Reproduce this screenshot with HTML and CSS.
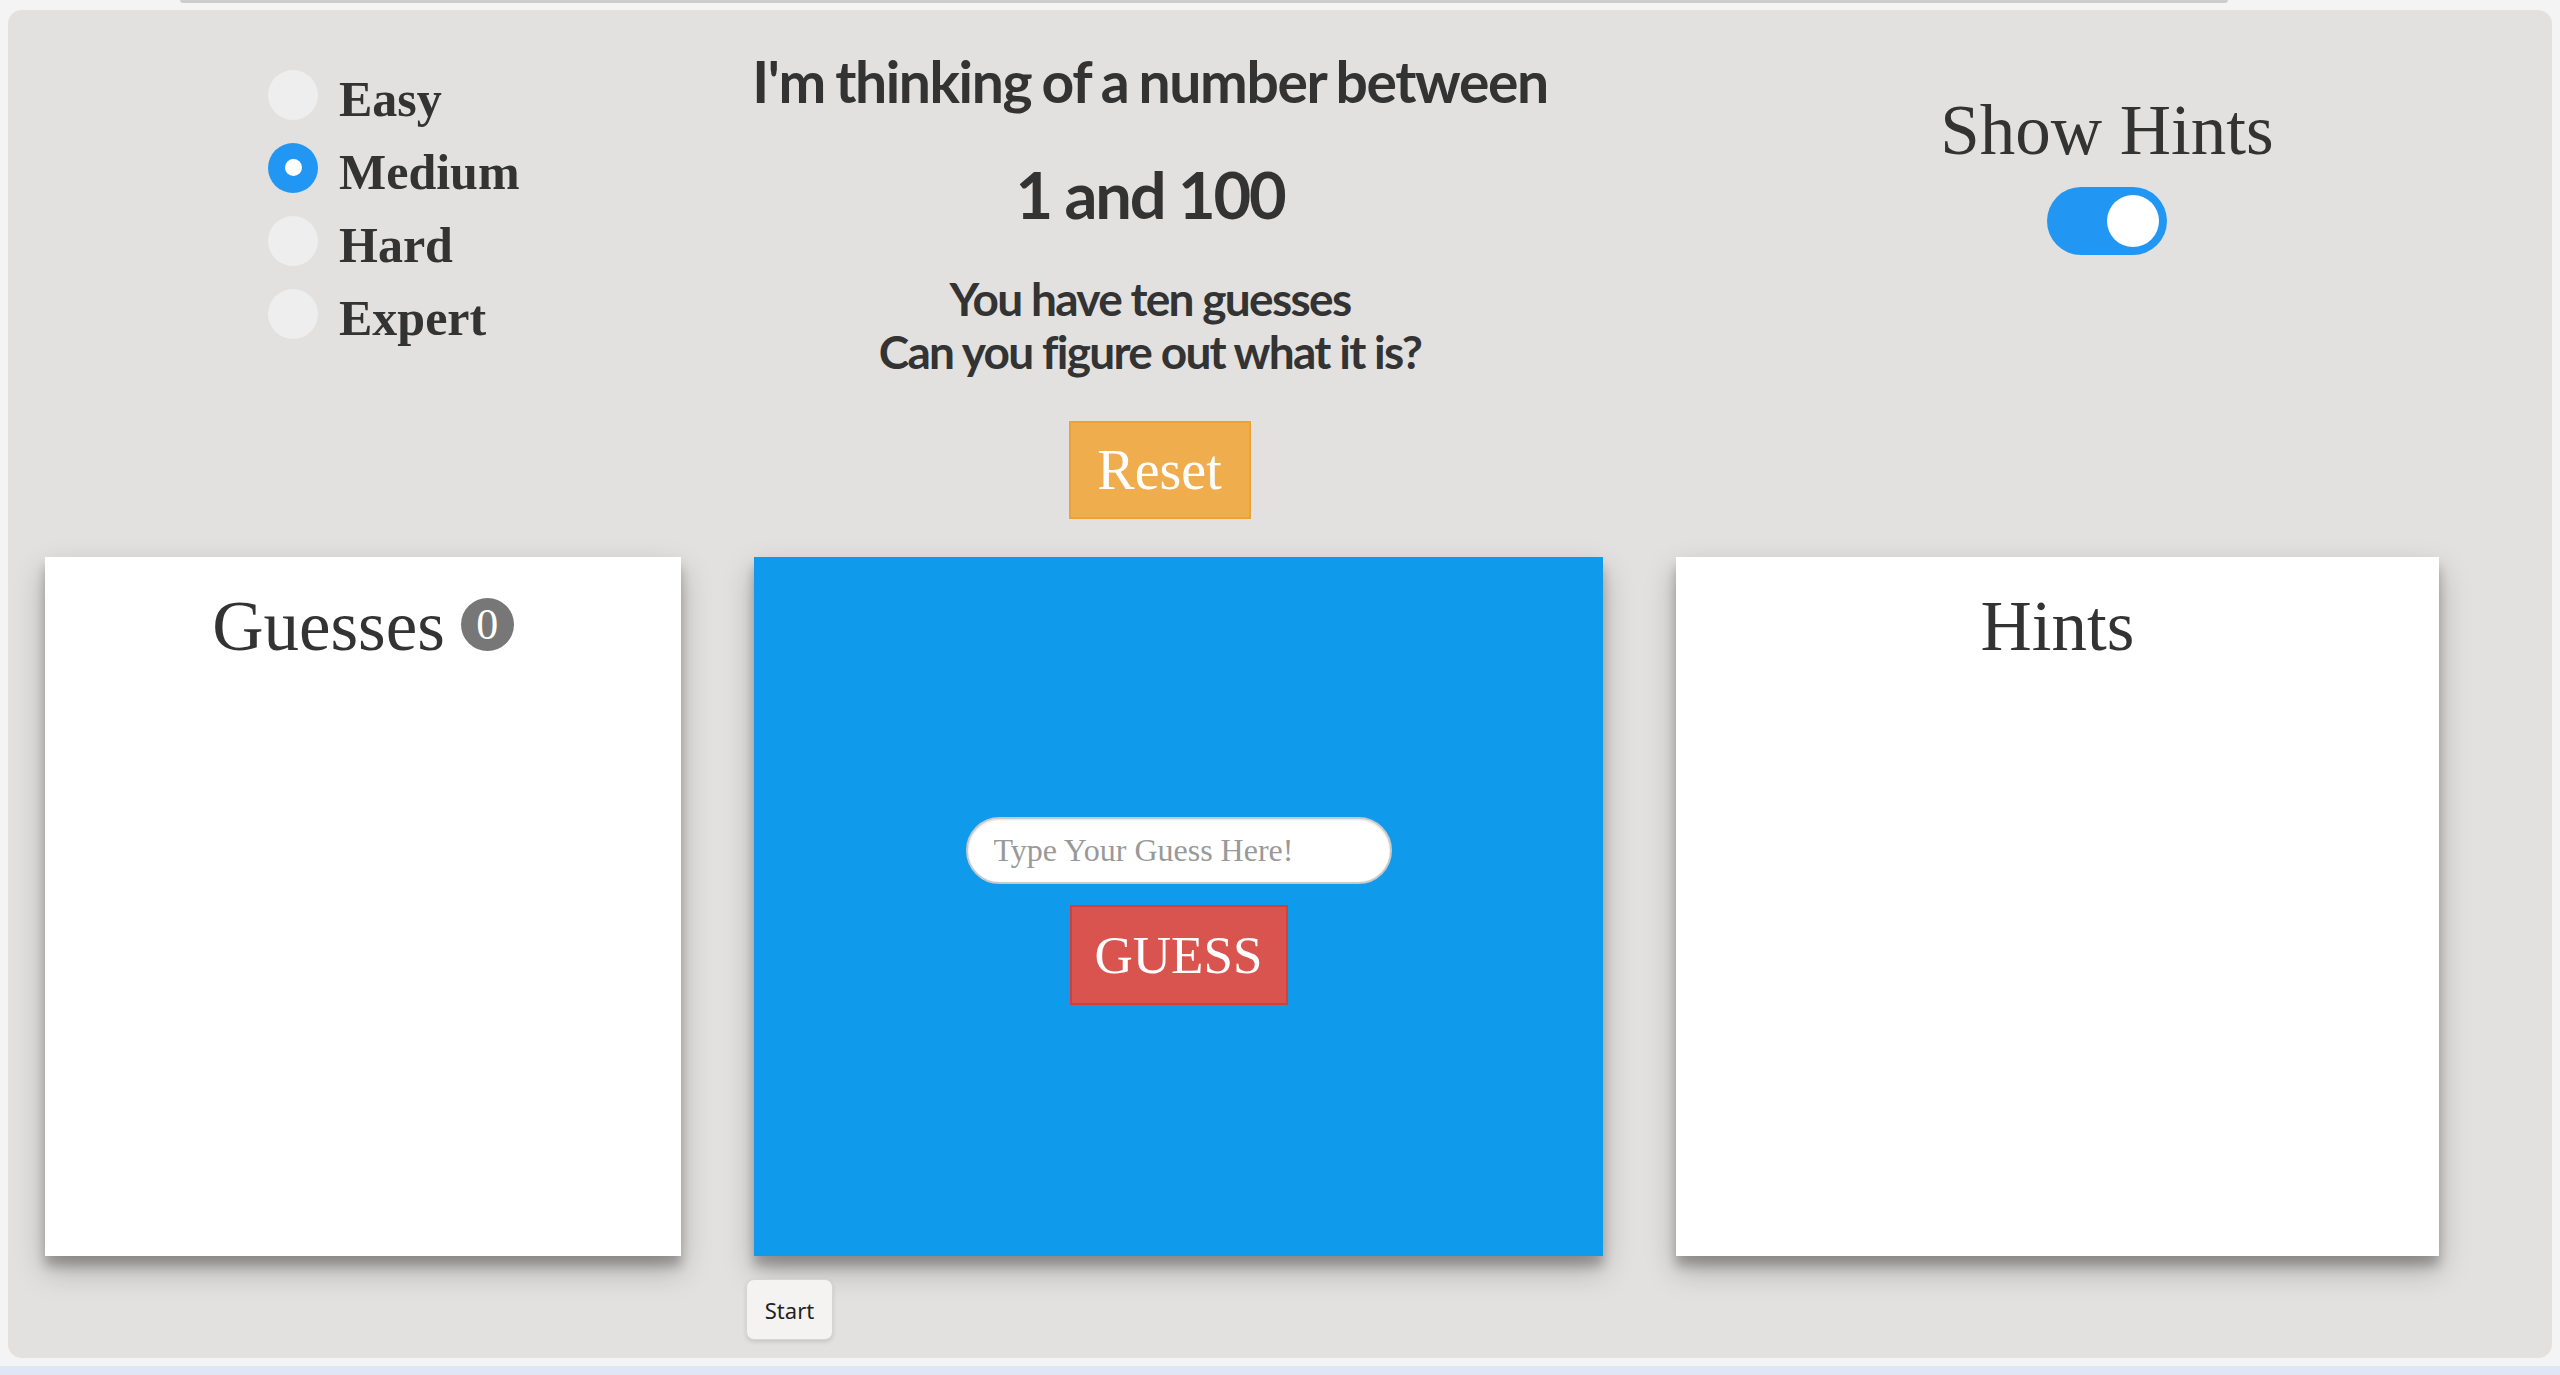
FILE: index.html
```html
<!DOCTYPE html>
<html lang="en">
<head>
<meta charset="utf-8">
<title>Guess the Number</title>
<link rel="stylesheet" href="styles.css">
</head>
<body>
<div class="topbar"></div>
<main class="panel">
  <section class="top-row">
    <div class="levels">
      <label class="level"><span class="radio"></span><span class="level-name">Easy</span></label>
      <label class="level"><span class="radio checked"></span><span class="level-name">Medium</span></label>
      <label class="level"><span class="radio"></span><span class="level-name">Hard</span></label>
      <label class="level"><span class="radio"></span><span class="level-name">Expert</span></label>
    </div>
    <div class="intro">
      <h1 class="headline">I'm thinking of a number between</h1>
      <h2 class="range">1 and 100</h2>
      <p class="sub">You have ten guesses<br>Can you figure out what it is?</p>
      <button class="btn-reset">Reset</button>
    </div>
    <div class="hints-toggle">
      <div class="toggle-label">Show Hints</div>
      <div class="switch"><span class="knob"></span></div>
    </div>
  </section>
  <section class="cards">
    <div class="card">
      <h3 class="card-title">Guesses <span class="badge">0</span></h3>
    </div>
    <div class="card card-blue">
      <div class="guess-form">
        <input class="guess-input" type="text" placeholder="Type Your Guess Here!">
        <button class="btn-guess">GUESS</button>
      </div>
    </div>
    <div class="card">
      <h3 class="card-title">Hints</h3>
    </div>
  </section>
  <div class="start-row">
    <button class="btn-start">Start</button>
  </div>
</main>
<div class="bottom-strip"></div>
</body>
</html>
```
FILE: styles.css
```css
* { box-sizing: border-box; }
html, body { margin: 0; padding: 0; }
body {
  background: #f4f4f4;
  width: 2560px;
  height: 1375px;
  overflow: hidden;
  color: #333;
  font-family: "Liberation Serif", serif;
}
.topbar {
  height: 3px;
  margin: 0 332px 0 180px;
  background: #cdcdcd;
  border-radius: 0 0 3px 3px;
}
.panel {
  margin: 7px 8px 0 8px;
  height: 1348px;
  background: #e2e1df;
  border-radius: 14px;
  display: flex;
  flex-direction: column;
}
.top-row {
  display: grid;
  grid-template-columns: 692px 900px 1fr;
  align-items: start;
}
.levels {
  padding: 48px 0 0 260px;
  display: flex;
  flex-direction: column;
}
.level {
  height: 73px;
  display: flex;
  align-items: center;
  gap: 21px;
}
.radio {
  width: 50px;
  height: 50px;
  border-radius: 50%;
  background: #eeeeee;
  display: flex;
  align-items: center;
  justify-content: center;
  flex: none;
}
.radio.checked { background: #2196f3; }
.radio.checked::after {
  content: "";
  width: 17px;
  height: 17px;
  border-radius: 50%;
  background: #fff;
}
.level-name {
  font-family: "Liberation Serif", serif;
  font-weight: bold;
  font-size: 50px;
  line-height: 1.107;
  margin-top: 10px;
  color: #333;
}
.intro {
  padding-top: 37px;
  display: flex;
  flex-direction: column;
  align-items: center;
  text-align: center;
  font-family: Lato, "Open Sans", sans-serif;
  font-weight: bold;
}
.headline {
  margin: 0;
  font-size: 57px;
  line-height: 68px;
  letter-spacing: -1.4px;
  word-spacing: -2px;
  font-weight: bold;
  white-space: nowrap;
}
.range {
  margin: 40px 0 0;
  font-size: 65px;
  line-height: 78px;
  letter-spacing: -2.2px;
  font-weight: bold;
}
.sub {
  margin: 39px 0 0;
  font-size: 46px;
  line-height: 53px;
  letter-spacing: -1.7px;
}
.btn-reset {
  margin: 43px 0 38px 19px;
  width: 182px;
  height: 98px;
  background: #f0ad4e;
  border: 2px solid #eea236;
  color: #fff;
  font-family: "Liberation Serif", serif;
  font-size: 56px;
  padding: 0;
}
.hints-toggle {
  padding: 80px 0 0 62px;
  display: flex;
  flex-direction: column;
  align-items: center;
}
.toggle-label {
  font-size: 71px;
  line-height: 80px;
  color: #333;
}
.switch {
  margin-top: 17px;
  width: 120px;
  height: 68px;
  border-radius: 34px;
  background: #2196f3;
  display: flex;
  align-items: center;
  justify-content: flex-end;
  padding-right: 8px;
}
.knob {
  width: 52px;
  height: 52px;
  border-radius: 50%;
  background: #fff;
}
.cards {
  display: grid;
  grid-template-columns: 636px 849px 763px;
  column-gap: 73px;
  padding-left: 37px;
  height: 699px;
}
.card {
  background: #fff;
  box-shadow: 0 14px 28px rgba(0,0,0,0.25), 0 10px 10px rgba(0,0,0,0.22);
  display: flex;
  flex-direction: column;
  align-items: center;
}
.card-title {
  margin: 0;
  padding-top: 32px;
  font-size: 71px;
  line-height: 75px;
  font-weight: normal;
  color: #333;
  display: flex;
  align-items: center;
}
.badge {
  margin-left: 16px;
  width: 53px;
  height: 53px;
  border-radius: 50%;
  background: #777;
  color: #fff;
  font-size: 44px;
  line-height: 53px;
  text-align: center;
  margin-top: -4px;
}
.card-blue {
  background: #0f9aeb;
  justify-content: center;
}
.guess-form {
  display: flex;
  flex-direction: column;
  align-items: center;
  gap: 21px;
  margin-top: 8px;
}
.guess-input {
  width: 426px;
  height: 67px;
  border-radius: 34px;
  border: 2px solid #c9c9c9;
  box-shadow: inset 0 1px 2px rgba(0,0,0,0.12);
  background: #fff;
  padding: 0 0 0 26px;
  font-family: "Liberation Serif", serif;
  font-size: 32px;
  color: #555;
  outline: none;
}
.guess-input::placeholder { color: #999; }
.btn-guess {
  width: 218px;
  height: 100px;
  background: #d9534f;
  border: 2px solid #d43f3a;
  color: #fff;
  font-family: "Liberation Serif", serif;
  font-size: 53px;
  padding: 0;
}
.start-row {
  margin-top: 23px;
  padding-left: 738px;
}
.btn-start {
  width: 87px;
  height: 61px;
  border-radius: 8px;
  background: #f4f3f2;
  border: 1.5px solid #d6d5d4;
  box-shadow: 0 2px 4px rgba(0,0,0,0.12);
  font-family: "Noto Sans", "Open Sans", sans-serif;
  font-size: 22px;
  color: #222;
  padding: 0;
}
.bottom-strip {
  margin-top: 8px;
  height: 9px;
  background: #dfe7f4;
}
```
